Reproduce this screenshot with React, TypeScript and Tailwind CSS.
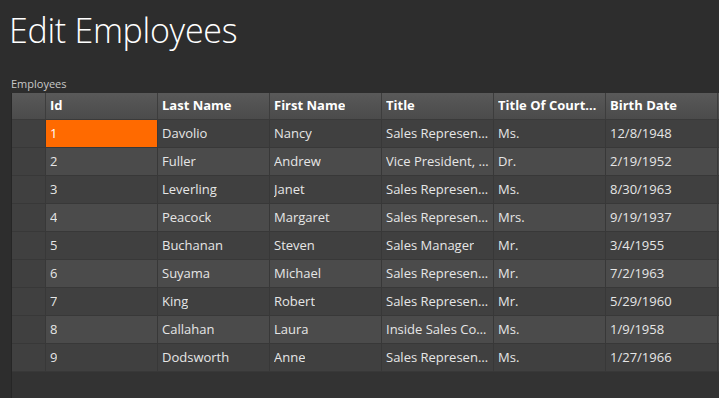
import React from "react";

const columns = ["Id", "Last Name", "First Name", "Title", "Title Of Courtesy", "Birth Date"];

const employees = [
  ["1", "Davolio", "Nancy", "Sales Representative", "Ms.", "12/8/1948"],
  ["2", "Fuller", "Andrew", "Vice President, Sales", "Dr.", "2/19/1952"],
  ["3", "Leverling", "Janet", "Sales Representative", "Ms.", "8/30/1963"],
  ["4", "Peacock", "Margaret", "Sales Representative", "Mrs.", "9/19/1937"],
  ["5", "Buchanan", "Steven", "Sales Manager", "Mr.", "3/4/1955"],
  ["6", "Suyama", "Michael", "Sales Representative", "Mr.", "7/2/1963"],
  ["7", "King", "Robert", "Sales Representative", "Mr.", "5/29/1960"],
  ["8", "Callahan", "Laura", "Inside Sales Coordinator", "Ms.", "1/9/1958"],
  ["9", "Dodsworth", "Anne", "Sales Representative", "Ms.", "1/27/1966"],
];

export default function App() {
  return (
    <div
      className="w-[719px] h-[398px] overflow-hidden bg-[#2d2d2d] text-[#e6e6e6] flex flex-col"
      style={{ fontFamily: "'Open Sans', 'Noto Sans', sans-serif" }}
    >
      <h1 className="pl-[9px] pt-[8px] h-[77px] shrink-0 text-[34px] font-light leading-[44px] text-white tracking-[-0.3px]">
        Edit Employees
      </h1>
      <div className="pl-[11px] h-[16px] shrink-0 text-[11px] leading-[14px] text-[#c8c8c8]">Employees</div>

      <div className="ml-[11px] flex-1 bg-[#333333] border-l border-[#262626] flex flex-col min-w-0">
        {/* header */}
        <div className="flex h-[27px] bg-gradient-to-b from-[#595959] to-[#4b4b4b] border-b border-[#3a3a3a] shrink-0">
          <div className="w-[34px] shrink-0 border-r border-[#3d3d3d]" />
          {columns.map((c) => (
            <div
              key={c}
              className="w-[112px] shrink-0 overflow-hidden border-r border-[#3d3d3d] px-[4px] flex items-center text-[13px] font-bold text-white"
            >
              <span className="truncate">{c}</span>
            </div>
          ))}
        </div>
        {/* rows */}
        {employees.map((row, i) => (
          <div
            key={row[0]}
            className={`flex h-[28px] border-b border-[#383838] shrink-0 ${i % 2 === 0 ? "bg-[#404040]" : "bg-[#4b4b4b]"}`}
          >
            <div className="w-[34px] shrink-0 border-r border-[#383838] bg-[#404040]" />
            {row.map((cell, j) => (
              <div
                key={j}
                className={`w-[112px] shrink-0 overflow-hidden border-r border-[#383838] px-[4px] flex items-center text-[13px] ${
                  i === 0 && j === 0 ? "bg-[#ff6a00] text-white" : ""
                }`}
              >
                <span className="truncate">{cell}</span>
              </div>
            ))}
          </div>
        ))}
      </div>
    </div>
  );
}
